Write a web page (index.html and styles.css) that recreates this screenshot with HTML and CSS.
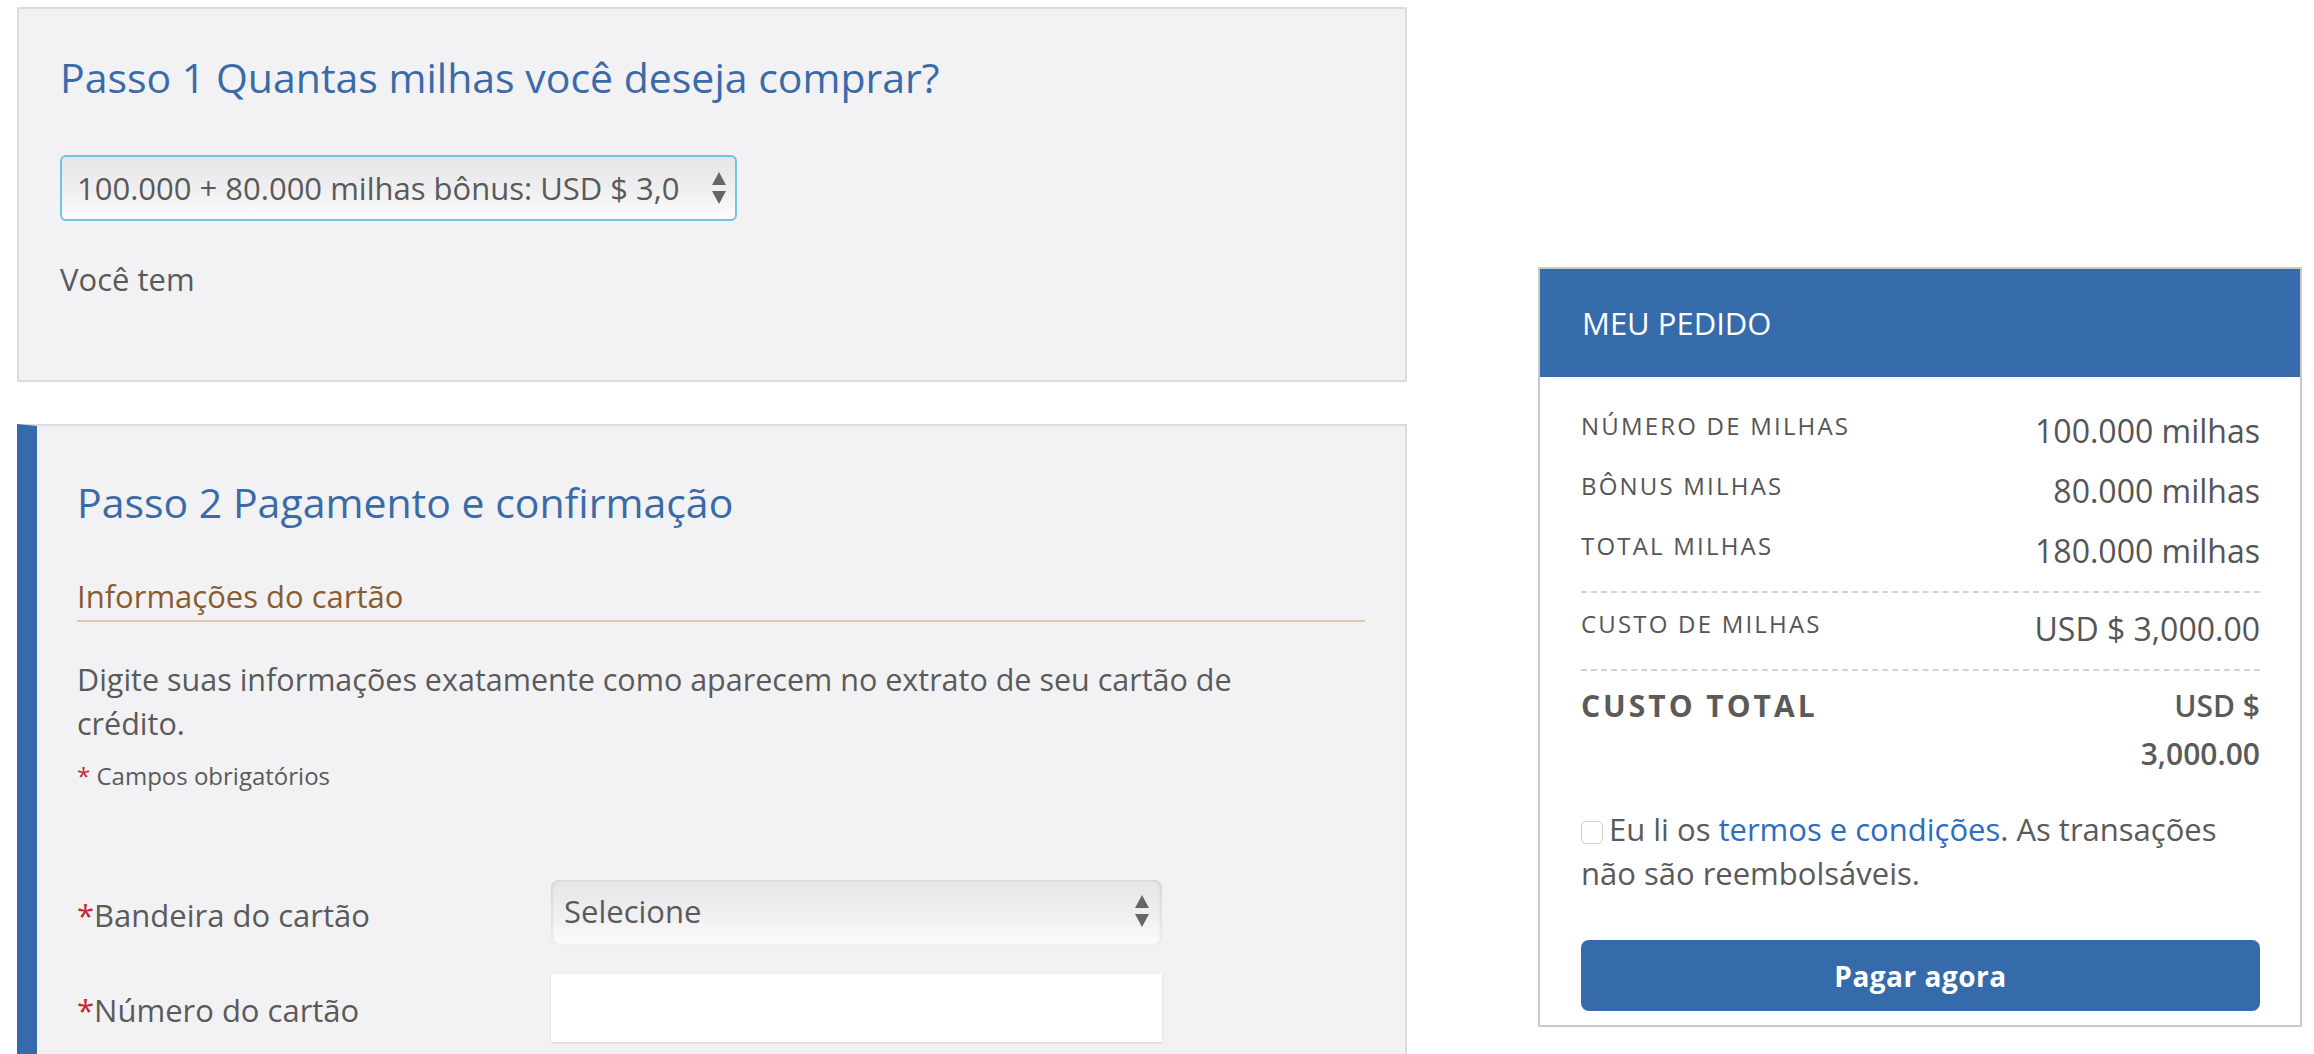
FILE: index.html
```html
<!DOCTYPE html>
<html lang="pt-BR">
<head>
<meta charset="utf-8">
<title>Comprar milhas</title>
<link rel="stylesheet" href="styles.css">
</head>
<body>
<div class="page">
  <div class="main-col">
    <section class="step step-one">
      <h2 class="step-title">Passo 1 Quantas milhas você deseja comprar?</h2>
      <div class="fake-select focused">
        <span class="fake-select-text">100.000 + 80.000 milhas bônus: USD $ 3,0</span>
        <svg class="arrows" width="16" height="36" viewBox="0 0 16 36"><polygon points="8,2 15,15 1,15" fill="#666"/><polygon points="1,21 15,21 8,34" fill="#666"/></svg>
      </div>
      <p class="you-have">Você tem</p>
    </section>

    <section class="step step-two">
      <h2 class="step-title">Passo 2 Pagamento e confirmação</h2>
      <h3 class="sub-title">Informações do cartão</h3>
      <p class="intro">Digite suas informações exatamente como aparecem no extrato de seu cartão de crédito.</p>
      <p class="required-note"><span class="req">*</span> Campos obrigatórios</p>

      <div class="form-row row-brand">
        <label class="form-label"><span class="req">*</span>Bandeira do cartão</label>
        <div class="fake-select plain">
          <span class="fake-select-text">Selecione</span>
          <svg class="arrows" width="16" height="36" viewBox="0 0 16 36"><polygon points="8,2 15,15 1,15" fill="#666"/><polygon points="1,21 15,21 8,34" fill="#666"/></svg>
        </div>
      </div>
      <div class="form-row row-number">
        <label class="form-label"><span class="req">*</span>Número do cartão</label>
        <div class="text-input"></div>
      </div>
    </section>
  </div>

  <aside class="order">
    <div class="order-head">MEU PEDIDO</div>
    <div class="order-body">
      <div class="line"><span class="line-label">NÚMERO DE MILHAS</span><span class="line-value">100.000 milhas</span></div>
      <div class="line"><span class="line-label">BÔNUS MILHAS</span><span class="line-value">80.000 milhas</span></div>
      <div class="line"><span class="line-label">TOTAL MILHAS</span><span class="line-value">180.000 milhas</span></div>
      <div class="dash"></div>
      <div class="line"><span class="line-label">CUSTO DE MILHAS</span><span class="line-value">USD $ 3,000.00</span></div>
      <div class="dash dash-second"></div>
      <div class="line total"><span class="line-label">CUSTO TOTAL</span><span class="line-value">USD $ 3,000.00</span></div>
      <p class="terms"><span class="checkbox"></span>Eu li os <a class="link" href="#">termos e condições</a>. As transações não são reembolsáveis.</p>
      <button class="pay" type="button">Pagar agora</button>
    </div>
  </aside>
</div>
</body>
</html>
```

FILE: styles.css
```css
* { box-sizing: border-box; }

html, body {
  margin: 0;
  padding: 0;
  background: #ffffff;
  font-family: "Open Sans", "Noto Sans", "DejaVu Sans", sans-serif;
  color: #5a5a5a;
  overflow: hidden;
}

.page {
  display: flex;
  align-items: flex-start;
  padding: 7px 0 0 17px;
  width: 2314px;
}

.main-col {
  width: 1390px;
  display: flex;
  flex-direction: column;
  gap: 42px;
}

.step {
  background: #f2f2f4;
  border: 2px solid #dcdcde;
  padding: 0 40px 0 41px;
}

.step-one {
  height: 375px;
  padding-top: 40px;
}

.step-two {
  border-left: 20px solid #356aab;
  padding-left: 40px;
  padding-top: 48px;
  height: 700px;
}

.step-title {
  margin: 0;
  font-weight: 400;
  font-size: 41px;
  line-height: 56px;
  color: #3a6ba8;
}

.fake-select {
  display: flex;
  align-items: center;
  justify-content: space-between;
  background: linear-gradient(#e6e6e8, #f0f0f2 55%, #fcfcfc);
  color: #5a5a5a;
  white-space: nowrap;
}

.fake-select.focused {
  margin-top: 50px;
  width: 677px;
  height: 66px;
  border: 2px solid #6ec4ec;
  border-radius: 6px;
  padding: 0 8px 0 15px;
  font-size: 31px;
}

.fake-select.plain {
  width: 611px;
  height: 65px;
  border-radius: 8px;
  padding: 0 12px 4px 13px;
  font-size: 31px;
  box-shadow: inset 2px 0 3px rgba(0,0,0,0.08), inset -2px 0 3px rgba(0,0,0,0.08);
}

.arrows { flex: none; }

.you-have {
  margin: 38px 0 0;
  font-size: 31px;
  line-height: 40px;
}

.sub-title {
  margin: 46px 0 0;
  font-weight: 400;
  font-size: 31px;
  line-height: 40px;
  color: #8b5b30;
  padding-bottom: 4px;
  border-bottom: 2px solid #e2c7aa;
}

.intro {
  margin: 35px 0 0;
  font-size: 30.5px;
  line-height: 44px;
  max-width: 1230px;
}

.required-note {
  margin: 16px 0 0;
  font-size: 24px;
  line-height: 30px;
}

.req { color: #c3262c; }

.form-row {
  display: flex;
  align-items: center;
}

.row-brand { margin-top: 89px; }
.row-number { margin-top: 29px; }

.form-label {
  width: 474px;
  font-size: 31px;
  line-height: 40px;
  padding-top: 4px;
}

.text-input {
  width: 611px;
  height: 68px;
  background: #ffffff;
  box-shadow: 0 1px 2px rgba(0,0,0,0.12);
}

/* order summary */
.order {
  margin-left: 131px;
  margin-top: 260px;
  width: 764px;
  border: 2px solid #c9c9c9;
  background: #ffffff;
}

.order-head {
  background: #356bab;
  color: #ffffff;
  height: 108px;
  display: flex;
  align-items: center;
  padding: 0 42px;
  font-size: 31px;
  font-weight: 400;
}

.order-body {
  padding: 34px 40px 14px 41px;
}

.line {
  display: flex;
  justify-content: space-between;
  align-items: flex-start;
  margin-bottom: 20px;
}

.line-label {
  font-size: 24px;
  line-height: 30px;
  letter-spacing: 2.2px;
  color: #555;
}

.line-value {
  font-size: 32px;
  line-height: 40px;
  color: #555;
  text-align: right;
}

.dash {
  border-top: 2px dashed #d2d2d2;
  margin: 2px 0 16px;
}

.dash-second { margin: 4px 0 11px; }

.line.total { margin-bottom: 0; }

.line.total .line-label {
  font-size: 30px;
  line-height: 48px;
  font-weight: 700;
  letter-spacing: 3px;
  color: #5a5a5a;
}

.line.total .line-value {
  width: 190px;
  font-size: 30px;
  line-height: 48px;
  font-weight: 600;
  color: #5a5a5a;
}

.terms {
  margin: 29px 0 0;
  font-size: 31px;
  line-height: 44px;
  color: #5a5a5a;
  max-width: 665px;
}

.checkbox {
  display: inline-block;
  width: 22px;
  height: 23px;
  border: 1.5px solid #cfcfcf;
  border-radius: 5px;
  background: #fff;
  margin-right: 6px;
  vertical-align: -3px;
}

.link {
  color: #2d6cbf;
  text-decoration: none;
}

.pay {
  display: block;
  width: 100%;
  margin-top: 45px;
  height: 71px;
  border: 0;
  border-radius: 8px;
  background: #356bab;
  color: #ffffff;
  font-family: "Open Sans", "Noto Sans", sans-serif;
  font-size: 28px;
  font-weight: 700;
  letter-spacing: 0.5px;
}
```
